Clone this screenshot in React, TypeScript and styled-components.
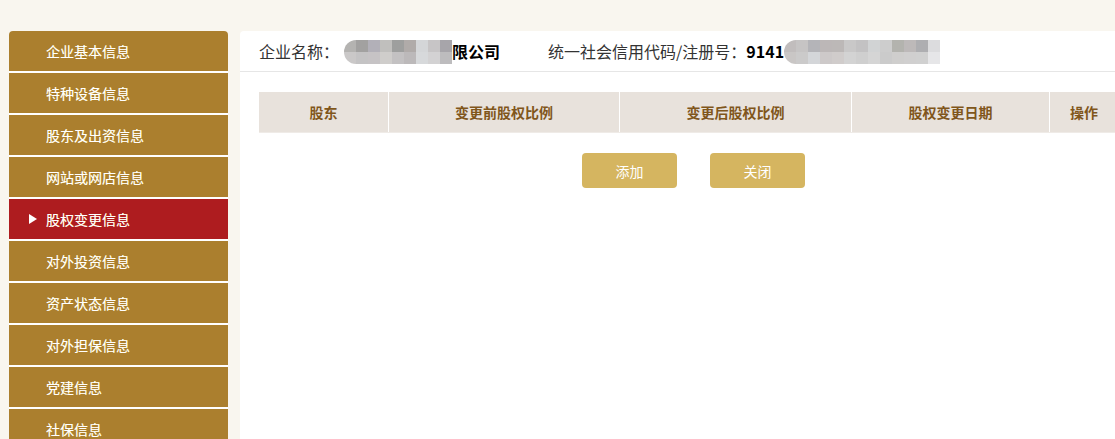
import React from "react";
import styled, { createGlobalStyle } from "styled-components";

const Global = createGlobalStyle`
  html, body { margin: 0; padding: 0; background: #f9f6ef; overflow: hidden; }
  body { font-family: "Microsoft YaHei", "Noto Sans CJK SC", "Noto Sans", sans-serif; }
  * { box-sizing: border-box; }
`;

const Page = styled.div`
  display: flex;
  align-items: flex-start;
  gap: 12px;
  padding: 31px 0 0 9px;
  width: 1160px;
  height: 439px;
`;

const Sidebar = styled.nav`
  width: 219px;
  flex: none;
  display: flex;
  flex-direction: column;
  gap: 2px;
  background: #ffffff;
  border-radius: 4px 4px 0 0;
  overflow: hidden;
`;

const NavItem = styled.div<{ $active?: boolean }>`
  position: relative;
  height: 40px;
  display: flex;
  align-items: center;
  padding-left: 37px;
  background: ${(p) => (p.$active ? "#ae1c1f" : "#ab7f2e")};
  color: #ffffff;
  font-size: 14px;
  text-shadow: 0.3px 0 0 rgba(255, 240, 150, 0.6);
`;

const Arrow = styled.span`
  position: absolute;
  left: 20px;
  top: 15px;
  width: 0;
  height: 0;
  border-top: 5px solid transparent;
  border-bottom: 5px solid transparent;
  border-left: 8px solid #ffffff;
`;

const Main = styled.main`
  width: 907px;
  flex: none;
  height: 408px;
  background: #ffffff;
  border-radius: 4px 0 0 0;
`;

const InfoBar = styled.div`
  height: 41px;
  display: flex;
  align-items: center;
  padding-left: 19px;
  border-bottom: 1px solid #e6e6e6;
  font-size: 16px;
  color: #333333;
`;

const InfoGroup = styled.div<{ $ml?: number }>`
  display: flex;
  align-items: center;
  margin-left: ${(p) => p.$ml ?? 0}px;
  white-space: nowrap;
`;

const Strong = styled.span`
  font-weight: bold;
  color: #000000;
`;

const Mosaic = styled.div<{ $cols: number; $ml?: number }>`
  display: grid;
  grid-template-columns: repeat(${(p) => p.$cols}, 12px);
  grid-auto-rows: 12px;
  border-radius: 12px 0 0 12px;
  overflow: hidden;
  margin-top: 2px;
  margin-left: ${(p) => p.$ml ?? 0}px;
`;

const Cell = styled.span<{ $c: string }>`
  background: ${(p) => p.$c};
`;

const Content = styled.div`
  padding: 20px 19px 0;
`;

const Table = styled.div`
  width: 859px;
  display: grid;
  grid-template-columns: 129px 230px 231px 197px 68px;
  gap: 1px;
  background: #ffffff;
  border-bottom: 1px solid #efebe7;
`;

const Th = styled.div`
  height: 40px;
  display: flex;
  align-items: center;
  justify-content: center;
  background: #e8e2dc;
  color: #80561b;
  font-size: 14px;
  font-weight: bold;
`;

const Buttons = styled.div`
  display: flex;
  justify-content: center;
  gap: 33px;
  margin-top: 20px;
`;

const Button = styled.button`
  width: 95px;
  height: 35px;
  border: none;
  border-radius: 4px;
  background: #d5b560;
  color: #ffffff;
  font-family: inherit;
  font-size: 14px;
  cursor: pointer;
`;

const nav = [
  "企业基本信息",
  "特种设备信息",
  "股东及出资信息",
  "网站或网店信息",
  "股权变更信息",
  "对外投资信息",
  "资产状态信息",
  "对外担保信息",
  "党建信息",
  "社保信息",
];

const grays1 = [
  "#b4b3b1", "#a2a1a0", "#b2b0b8", "#c0bfbd", "#9e9f9e", "#b0aba9", "#d4d6d8", "#c7c5c6", "#a7a5aa",
  "#cac8c8", "#c4c3c4", "#c6c3c5", "#cfcdcb", "#c3c1c2", "#bcb9ba", "#d7d9db", "#d3d2d3", "#bdbcbe",
];
const grays2 = [
  "#c1bdbd", "#c6c4c4", "#b4b4b8", "#bcb7b7", "#bcb8b7", "#c9c8c8", "#c3c2c3", "#d1d3d4", "#cdcdcd", "#b3b3ae", "#bdb9b9", "#aeaeb1", "#dcdcde",
  "#c9c6c5", "#cbcaca", "#d4d6d9", "#cdc9c9", "#d0cccb", "#d3d3d3", "#cfcfcf", "#d5d5d5", "#cbcbcb", "#cfcecd", "#d0cfcf", "#d0d0d0", "#e6e6e8",
];

export default function App() {
  return (
    <>
      <Global />
      <Page>
        <Sidebar>
          {nav.map((t) => (
            <NavItem key={t} $active={t === "股权变更信息"}>
              {t === "股权变更信息" && <Arrow />}
              {t}
            </NavItem>
          ))}
        </Sidebar>
        <Main>
          <InfoBar>
            <InfoGroup>
              企业名称：
              <Mosaic $cols={9} $ml={5}>
                {grays1.map((c, i) => (
                  <Cell key={i} $c={c} />
                ))}
              </Mosaic>
              <Strong>限公司</Strong>
            </InfoGroup>
            <InfoGroup $ml={48}>
              统一社会信用代码/注册号：<Strong>9141</Strong>
              <Mosaic $cols={13}>
                {grays2.map((c, i) => (
                  <Cell key={i} $c={c} />
                ))}
              </Mosaic>
            </InfoGroup>
          </InfoBar>
          <Content>
            <Table>
              <Th>股东</Th>
              <Th>变更前股权比例</Th>
              <Th>变更后股权比例</Th>
              <Th>股权变更日期</Th>
              <Th>操作</Th>
            </Table>
            <Buttons>
              <Button>添加</Button>
              <Button>关闭</Button>
            </Buttons>
          </Content>
        </Main>
      </Page>
    </>
  );
}
